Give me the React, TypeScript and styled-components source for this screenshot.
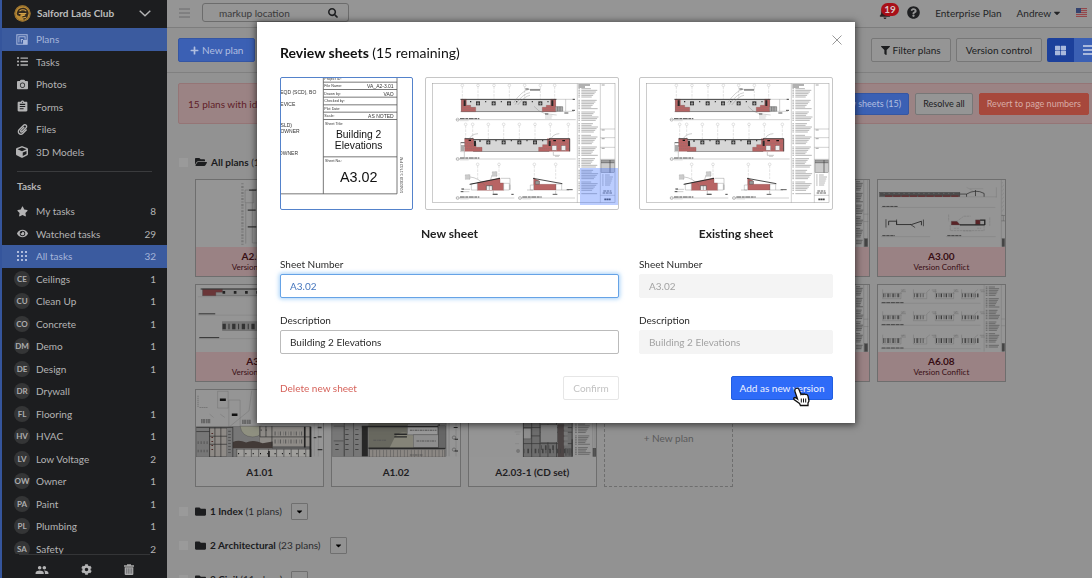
import React from "react";
import styled, { createGlobalStyle, css } from "styled-components";
import {
  FaBell, FaCamera, FaCaretDown, FaCog, FaCube, FaEye, FaFilter, FaFolder, FaFolderOpen,
  FaListUl, FaPaperclip, FaPlus, FaQuestionCircle, FaSearch, FaStar, FaThLarge,
} from "react-icons/fa";
import { MdAssignment, MdPeople } from "react-icons/md";

const Global = createGlobalStyle`
  * { box-sizing: border-box; }
  html, body { margin: 0; height: 100%; overflow: hidden; }
  #root { height: 100%; }
  body, button, input { font-family: Lato, "Liberation Sans", sans-serif; font-size: 10px; line-height: 14px; }
  body { background: #929292; color: #1f2022; }
  button { cursor: pointer; }
  svg { display: block; flex: none; }
  ul { list-style: none; margin: 0; padding: 0; }
`;

const GUTTER = "20px";

const Shell = styled.div`display: flex; height: 100vh; overflow: hidden;`;

/* ---------- sidebar ---------- */
const Sidebar = styled.aside`
  width: 167px; flex: none; display: flex; flex-direction: column;
  background: #1c1d1f; color: #b4b4b5; border-left: 2px solid #35559c;
`;
const Club = styled.button`
  display: flex; align-items: center; gap: 6px; height: 28px; padding: 0 16px 2px 12px; flex: none;
  border: 0; background: none; color: #bdbdbe; font-weight: 700; text-align: left;
  span { flex: 1; white-space: nowrap; }
`;
const Rows = styled.ul<{ $height: number }>`
  display: grid; grid-auto-rows: 1fr; height: ${p => p.$height}px; flex: none;
`;
const Row = styled.a<{ $active?: boolean }>`
  display: flex; align-items: center; gap: 6px; height: 100%; padding: 0 11px 0 12px;
  color: ${p => (p.$active ? "#a6b6da" : "#b4b4b5")}; text-decoration: none;
  background: ${p => (p.$active ? "#3b5b9f" : "transparent")};
`;
const RowIcon = styled.span`width: 16px; display: flex; justify-content: center; color: #b3b3b4;`;
const RowLabel = styled.span`flex: 1;`;
const Avatar = styled.span`
  width: 16px; height: 16px; border-radius: 50%; background: #343536; color: #adadae;
  display: flex; align-items: center; justify-content: center; font-size: 8px; line-height: 8px; font-weight: 700;
`;
const SideRule = styled.hr`
  width: auto; margin: 8px 15px 0; border: 0; border-top: 1px solid #3a3b3d; flex: none;
`;
const SideHeading = styled.h2`margin: 0; padding: 7px 15px; height: 28px; font-size: 10px; font-weight: 700; flex: none;`;
const TaskScroll = styled.div`flex: 1; min-height: 0; overflow: hidden;`;
const SideFoot = styled.div`
  display: flex; justify-content: space-around; align-items: center; flex: none;
  height: 24px; margin: 0 17px; padding-top: 6px; border-top: 1px solid #343537;
`;
const IconButton = styled.button`
  border: 0; padding: 0; background: none; color: inherit; display: flex; align-items: center;
`;

/* ---------- workspace ---------- */
const Main = styled.main`flex: 1; min-width: 0; margin-right: -${GUTTER}; overflow: hidden;`;
const Bar = styled.header`
  display: flex; align-items: center; height: 28px; padding: 0 25px 2px 12px;
  border-bottom: 1px solid #7d7d7d; background: #959595;
`;
const SearchBox = styled.label`
  display: flex; align-items: center; width: 147px; height: 19px; margin-left: 12px; padding: 0 10px 0 16px;
  border: 1px solid #6c6c6c; border-radius: 3px;
  input { flex: 1; min-width: 0; padding: 0; border: 0; outline: 0; background: none; color: #3a3a3b; }
`;
const BarRight = styled.div`display: flex; align-items: center; margin-left: auto;`;
const Bell = styled(IconButton)`position: relative; margin-right: 16px; color: #2b2020;`;
const Badge = styled.span`
  position: absolute; left: 2px; top: -4px; height: 13px; padding: 0 3px; border-radius: 7px;
  background: #a80f18; color: #d6c4c5; font-size: 10px; line-height: 13px; font-weight: 700;
`;
const BarText = styled.span`margin-left: 15px; color: #242527;`;
const UserMenu = styled(IconButton)`gap: 1px; margin: 0 14px 0 15px; color: #242527;`;

const Toolbar = styled.div`
  display: flex; align-items: center; gap: 5px; height: 45px; padding: 0 11px; border-bottom: 1px solid #808080;
`;
type Tone = "blue" | "plain" | "red";
const tones = {
  blue: css`background: #3b60b4; border-color: #3556a3; color: #b0bee0;`,
  plain: css`background: #959595; border-color: #777; color: #1c1d1f;`,
  red: css`background: #a7483c; border-color: #a7483c; color: #d8aca6;`,
};
const Button = styled.button<{ $tone: Tone; $short?: boolean }>`
  display: flex; align-items: center; gap: 3px; white-space: nowrap;
  height: ${p => (p.$short ? 22 : 24)}px; padding: 0 ${p => (p.$short ? 7 : 9)}px;
  font-size: ${p => (p.$short ? 9 : 10)}px; border: 1px solid; border-radius: 2px;
  ${p => tones[p.$tone]}
`;
const NewPlan = styled(Button)`margin-right: auto; padding: 0 11px;`;
const Toggle = styled.div`display: flex; border-radius: 2px; overflow: hidden;`;
const ToggleButton = styled.button<{ $on?: boolean }>`
  width: 27px; height: 24px; padding: 0; border: 0; color: #a9b8dc;
  display: flex; align-items: center; justify-content: center;
  background: ${p => (p.$on ? "#1c409b" : "#3b60b4")};
`;
const Alert = styled.section`
  display: flex; align-items: center; gap: 6px; height: 41px; margin: 10px 13px 0 11px; padding: 0 9px;
  border: 1px solid #957576; border-radius: 2px; background: #9b8384; color: #602028;
  p { margin: 0 auto 0 0; }
`;
const Folder = styled.div`
  display: flex; align-items: center; gap: 4px; height: 34px; padding-left: 12px; color: #1c1d1f;
  > svg { margin-left: 3px; }
`;
const AllPlans = styled(Folder)`margin-top: 21px;`;
const Tick = styled.input`appearance: none; width: 9px; height: 9px; margin: 0; background: #9a9a9a;`;
const FolderName = styled.span`color: #2a2b2d; b { color: #1a1b1d; }`;
const Drop = styled.button`
  width: 17px; height: 17px; margin-left: 5px; padding: 0; border: 1px solid #6f6f6f; border-radius: 1px;
  background: none; display: flex; align-items: center; justify-content: center;
`;
const Cards = styled.div`
  display: grid; grid-template-columns: repeat(auto-fill, minmax(129px, 1fr)); gap: 7px;
  padding: 0 106px 7px 28px;
`;
const Card = styled.article`
  height: 98px; border: 1px solid #6e6e6e; background: #959595; display: flex; flex-direction: column;
  > svg { width: 100%; height: 67px; }
`;
const Caption = styled.div<{ $conflict?: boolean }>`
  flex: 1; display: flex; flex-direction: column; align-items: center; justify-content: center;
  font-size: 10px; line-height: 12px; font-weight: 700;
  ${p => p.$conflict ? css`background: #9a8284; color: #380e14;` : css`background: #969696;`}
  small { font-size: 8px; line-height: 11px; font-weight: 400; }
`;
const NewCard = styled.button`
  height: 98px; border: 1px dashed #6e6e6e; background: none; color: #5a5a5b; padding: 0;
`;

/* ---------- dialog ---------- */
const Backdrop = styled.div`
  position: fixed; inset: 0 -${GUTTER} 0 0; display: flex; justify-content: center; align-items: flex-start;
  padding-top: 22px;
`;
const Dialog = styled.section`
  position: relative; width: 598px; padding: 22px 22px 23px 23px; background: #fff;
  box-shadow: 0 1px 7px 1px rgba(0, 0, 0, .6);
`;
const Title = styled.h1`margin: 0 0 15px; font-size: 14px; line-height: 18px; color: #111; span { font-weight: 400; }`;
const Close = styled(IconButton)`position: absolute; right: 13px; top: 13px; color: #999;`;
const Columns = styled.div`display: grid; grid-template-columns: minmax(0, 339fr) minmax(0, 194fr); column-gap: 20px;`;
const Column = styled.div`display: flex; flex-direction: column;`;
const Previews = styled.div`display: flex; gap: 12px; height: 133px;`;
const Preview = styled.figure<{ $focus?: boolean }>`
  margin: 0; flex: ${p => (p.$focus ? "0 0 133px" : "1")}; min-width: 0; overflow: hidden;
  border: 1px solid ${p => (p.$focus ? "#5482cb" : "#c6c6c6")}; border-radius: 2px;
  svg { width: 100%; height: 100%; }
`;
const ColumnTitle = styled.h2`margin: 16px 0 15px; font-size: 12px; line-height: 16px; text-align: center; color: #222;`;
const Field = styled.label`display: flex; flex-direction: column; gap: 3px; margin-bottom: 15px; color: #2b2b2b;`;
const TextInput = styled.input<{ $lit?: boolean }>`
  width: 100%; height: 24px; padding: 0 9px; border: 1px solid #bbb; border-radius: 2px; outline: 0;
  background: #fff; color: #2b2b2b;
  &:disabled { background: #f4f4f4; border-color: #f4f4f4; color: #a3a3a3; }
  ${p => p.$lit && css`border-color: #66a3e6; color: #4676bd; box-shadow: 0 0 4px 1px rgba(110, 180, 245, .6);`}
`;
const Actions = styled.div`display: flex; align-items: center; margin-top: 7px;`;
const DeleteButton = styled(IconButton)`color: #d6625a;`;
const Confirm = styled.button`
  width: 56px; height: 24px; margin-left: auto; padding: 0; border: 1px solid #e6e6e6; border-radius: 2px;
  background: #fff; color: #c3c3c3;
`;
const AddVersion = styled.button`
  position: relative; width: 102px; height: 24px; margin-left: auto; padding: 0; border: 1px solid #215ee0;
  border-radius: 2px; background: #2e6bf8; color: #eef3ff; white-space: nowrap;
`;
const Pointer = styled.svg`position: absolute; left: 60px; top: 10px;`;

/* ---------- drawings ---------- */
const range = (n: number) => Array.from({ length: n }, (_, i) => i);

/* Short grey strokes that read as a block of fine notes. */
function Notes({ x, y, w, h, step = 5, c = "#777" }: { x: number; y: number; w: number; h: number; step?: number; c?: string }) {
  return (
    <g stroke={c} strokeWidth={2} opacity={0.8}>
      {range(Math.floor(h / step)).filter(i => i % 7 !== 6).map(i => (
        <path key={i} d={`M${x} ${y + i * step}h5m4 0h${(w - 10) * (0.55 + ((i * 37) % 45) / 100)}`} />
      ))}
    </g>
  );
}

const Label = ({ x, y, w }: { x: number; y: number; w: number }) => (
  <g>
    <path d={`M${x} ${y}h${w}`} stroke="#888" strokeWidth="1.2" />
    <circle cx={x + 5} cy={y} r="4.5" fill="none" stroke="#555" />
    <path d={`M${x + 12} ${y - 3}h58`} stroke="#333" strokeWidth="2.6" strokeDasharray="14 2 9 2" />
    <path d={`M${x + 12} ${y + 3}h26`} stroke="#aaa" />
  </g>
);

function GridMarks({ xs, y, h }: { xs: number[]; y: number; h: number }) {
  return (
    <g fill="none" stroke="#aaa">
      {xs.map(x => <g key={x}><circle cx={x} cy={y} r="4" /><path d={`M${x} ${y + 4}v${h}`} strokeDasharray="8 3" /></g>)}
    </g>
  );
}

function Windows({ xs, y }: { xs: number[]; y: number }) {
  return (
    <g>
      {xs.map(x => (
        <g key={x}>
          <rect x={x - 6} y={y} width="12" height="12" fill="#333" />
          <path d={`M${x} ${y + 2}v10M${x - 4} ${y + 7}h8`} stroke="#ddd" strokeWidth="1.5" />
          <circle cx={x + 23} cy={y + 1} r="2" fill="#222" />
        </g>
      ))}
    </g>
  );
}

function Elevations({ selected }: { selected?: boolean }) {
  return (
    <svg viewBox="18 24 576 393" preserveAspectRatio="none" aria-label="Building 2 elevations">
      <rect x="38" y="41" width="547" height="357" fill="#fff" stroke="#999" strokeWidth="1.5" />
      <path d="M472 41v357M541 41v357M541 177h44M541 203h44M541 232h44M541 376h44M541 268h44" stroke="#777" fill="none" />

      <GridMarks xs={[127, 174, 222, 268, 314, 361, 404]} y={46} h={36} />
      <rect x="124" y="88" width="283" height="37" fill="#d6d6d6" stroke="#555" strokeWidth="1.5" />
      <path d="M124 88h15v18h13v6h15v13h-43zM407 88h-15v18h-13v6h-12v13h40z" fill="#b86464" stroke="#8a4c4c" />
      <path d="M124 107h28M124 113h42M124 119h42M367 119h40M379 112h28" stroke="#777" strokeDasharray="4 2" />
      <path d="M134 91v17M397 91v17" stroke="#292929" strokeWidth="6" />
      <path d="M121 88h289" stroke="#333" strokeWidth="2.4" />
      <Windows xs={[174, 221, 267, 314, 361]} y={94} />
      <circle cx="152" cy="95" r="2" />
      <path d="M407 110h21v14h-21M413 110v14M420 110v14" fill="#aaa" stroke="#555" strokeWidth="1.5" />
      <path d="M410 88h52M428 124h34M437 88v36M281 98Q306 62 327 58h35M285 104Q310 70 330 68M293 105Q314 78 330 76M342 109q13 16 33 22l35 4M375 138h22M375 144h20" fill="none" stroke="#777" />
      <path d="M330 60h30M316 57h10M375 132h10M458 88h7M456 121h9M433 129h12" stroke="#222" strokeWidth="2.4" />
      <path d="M121 125h289" stroke="#666" />
      <Label x={108} y={149} w={359} />

      <GridMarks xs={[137, 158, 205, 251, 298, 345, 391, 445]} y={163} h={42} />
      <rect x="161" y="209" width="226" height="36" fill="#d6d6d6" stroke="#555" strokeWidth="1.5" />
      <path d="M134 206h27v14h7v12h18v12h-52zM387 206h62v38h-93v-12h12v-8h14v-18z" fill="#b86464" stroke="#8a4c4c" />
      <path d="M134 220h28M134 228h32M134 236h48M360 236h88M382 220h66" stroke="#777" strokeDasharray="4 2" />
      <path d="M134 206h26M160 209h230M387 206h62M449 206v38M122 218h12M123 228h11" stroke="#333" strokeWidth="2.4" />
      <path d="M122 218v27h12" fill="none" stroke="#777" /><rect x="123" y="228" width="10" height="15" fill="#aaa" />
      <path d="M165 212v16M389 212v16" stroke="#292929" strokeWidth="6" />
      <Windows xs={[205, 251, 298, 345]} y={211} />
      <path d="M146 211h7M178 213h4M400 212h8M427 212h8" stroke="#111" strokeWidth="4" />
      <rect x="396" y="227" width="14" height="14" fill="#eee" stroke="#666" /><rect x="424" y="227" width="13" height="14" fill="#eee" stroke="#666" />
      <path d="M146 209q8-17 28-18M392 209q6-17 26-18M400 246v10h20M133 245v18M405 259h12" fill="none" stroke="#666" />
      <Label x={108} y={267} w={359} />

      <GridMarks xs={[173, 237]} y={283} h={40} />
      <path d="M172 338l68-14v15h11v22h-79z" fill="#b86464" stroke="#8a4c4c" />
      <path d="M154 342v18h18v-20zM251 340h17v20h-17z" fill="#fff" stroke="#777" />
      <path d="M149 343l91-18" stroke="#292929" strokeWidth="3" />
      <path d="M199 360v-13h18v13" fill="#eee" stroke="#555" strokeWidth="2" /><path d="M208 347v13" stroke="#333" />
      <path d="M126 358h24M128 365h20M270 344v15M243 325h27v35M150 321q25 2 45 25M216 315l-5 17M220 362v10h12" fill="none" stroke="#666" />
      <path d="M136 314h14v14h-14zM217 305h14v14h-14z" fill="#ccc" stroke="#888" strokeDasharray="3 1" />
      <path d="M124 357h8M122 365h8M218 373h15M274 373h7" stroke="#222" strokeWidth="2.5" />
      <Label x={108} y={384} w={175} />

      <GridMarks xs={[343, 407]} y={283} h={40} />
      <path d="M341 325l17 8v10h50v17h-67z" fill="#b86464" stroke="#8a4c4c" />
      <path d="M408 342h17v18h-17zM331 345h10v15h-10z" fill="#fff" stroke="#777" />
      <path d="M339 325l88 16" stroke="#292929" strokeWidth="2.5" />
      <path d="M346 333h12v10h-12z" fill="#999" stroke="#444" /><path d="M321 360h18M425 360h22M407 362v10" stroke="#666" />
      <path d="M440 359h18M398 373h14" stroke="#222" strokeWidth="2.2" />
      <Label x={295} y={384} w={170} />

      <path d="M475 45h35M475 51h20" stroke="#444" strokeWidth="2.5" />
      <Notes x={475} y={56} w={62} h={320} />
      <path d="M545 45h9M545 180h9M545 206h9M545 235h9" stroke="#777" strokeWidth="2" />
      <rect x="543" y="270" width="40" height="38" fill="#ccc" stroke="#555" />
      <path d="M543 273h40M543 278h40M570 270v38" stroke="#444" strokeWidth="2" />
      <Notes x={546} y={315} w={36} h={45} step={6} />
      <path d="M550 363h24M548 369h28" stroke="#444" strokeWidth="2.6" strokeDasharray="8 2" />
      <path d="M553 388h20" stroke="#444" strokeWidth="5" strokeDasharray="5 1" />
      {selected && <rect x="480" y="294" width="114" height="111" fill="#4b7bff" opacity="0.38" />}
    </svg>
  );
}

function TitleBlock() {
  const small = { fontSize: 11, fill: "#333" };
  const mid = { fontSize: 15, fill: "#333" };
  return (
    <svg viewBox="33 145 393 392" fontFamily='"Liberation Sans", Arial, sans-serif'>
      <path d="M160 140v352M381 140v352M33 492h348M160 157h221M160 179h221M160 202h221M160 225h221M160 247h221M160 269h221M160 381h221" stroke="#555" strokeWidth="2.4" fill="none" />
      <g {...small}>
        <text x="163" y="151">Project ID:</text><text x="163" y="173">File Name:</text>
        <text x="163" y="196">Drawn by:</text><text x="163" y="217">Checked by:</text>
        <text x="163" y="240">Plot Date:</text><text x="163" y="262">Scale:</text>
        <text x="165" y="287">Sheet Title:</text><text x="165" y="398">Sheet No.:</text>
      </g>
      <g {...mid} textAnchor="end">
        <text x="371" y="175">VA_A2-3.01</text><text x="371" y="198">VAO</text><text x="371" y="264">AS NOTED</text>
        <text x="139" y="194">EQD (SCD), BO</text><text x="76" y="228">EVICE</text>
        <text x="66" y="293">(SLD)</text><text x="89" y="309">OWNER</text><text x="84" y="375">OWNER</text>
      </g>
      <g textAnchor="middle" fill="#111">
        <text x="266" y="325" fontSize="31">Building 2</text><text x="266" y="358" fontSize="31">Elevations</text>
        <text x="266" y="457" fontSize="43">A3.02</text>
      </g>
      <text transform="translate(399 490) rotate(-90)" fontSize="11" fill="#333">5/24/2010 1:17:52 PM</text>
    </svg>
  );
}

function SectionThumb() {
  return (
    <svg viewBox="83 28 384 200" preserveAspectRatio="none" fill="none" stroke="#555">
      <path d="M455 28v200M440 50v30" stroke="#6e6e6e" />
      <path d="M86 78h354" stroke="#777" />
      <rect x="88" y="65" width="242" height="12" fill="#4b4b4b" stroke="#333" />
      <path d="M104 76h226" stroke="#672a2c" strokeWidth="4" strokeDasharray="22 3" />
      <path d="M100 68h225" stroke="#949494" strokeWidth="1.5" strokeDasharray="3 12" />
      <path d="M330 70h20v8M350 70q27-16 53-2v10M377 58v18" stroke="#222" strokeWidth="2" />
      <path d="M350 50l20 10M360 54h40" stroke="#777" />
      <path d="M92 110h345M92 197h148M288 197h150" stroke="#777" />
      <path d="M96 107h48M96 194h38M292 194h42" stroke="#333" strokeWidth="2.5" strokeDasharray="10 2" />
      <path d="M115 163v-12h24v10h45l30-10v12" stroke="#222" strokeWidth="2.5" />
      <path d="M139 146v16M107 145v25M220 146v20M180 160l15 10" stroke="#222" strokeWidth="2" />
      <path d="M304 151h17l10 11h-27z" fill="#592326" /><path d="M377 147h14v14h-14z" fill="#592326" />
      <path d="M330 162h75M391 148h14v14" stroke="#222" strokeWidth="4" />
      <path d="M296 131v20M320 152l22-16h20M301 163v16h102v-16M420 140v25M312 172h15M382 172h12M340 180h25" stroke="#666" strokeDasharray="7 2" />
      <path d="M458 34v100M461 42v80" stroke="#777" strokeDasharray="4 8" />
      <path d="M455 134h12M455 150h12M461 134v16" stroke="#444" /><rect x="457" y="203" width="8" height="24" fill="#444" />
    </svg>
  );
}

function DetailThumb() {
  return (
    <svg viewBox="83 343 384 201" preserveAspectRatio="none" fill="none" stroke="#555">
      {[370, 436, 506].map((y, r) => (
        <g key={y}>
          {[97, 190, 256, 335].map((x, c) => (
            <g key={x}>
              <path d={`M${x} ${y - 14}v28h${c % 2 ? 40 : 55}v-20l10-8M${x} ${y - 2}h${c % 2 ? 36 : 58}`} stroke="#666" />
              <path d={`M${x + 2} ${y + 4}h${c === 1 ? 28 : 50}`} stroke="#3c3c3c" strokeWidth={r === 2 ? 14 : 11} strokeDasharray={c % 2 ? "2 5 4 3 1 4" : "3 3 1 4 2 2"} />
              <path d={`M${x + 55} ${y - 12}h14M${x + 58} ${y - 7}h12`} stroke="#555" />
            </g>
          ))}
          <path d={`M92 ${y + 28}h300`} stroke="#777" />
          <path d={`M94 ${y + 26}h66`} stroke="#333" strokeWidth="2.5" strokeDasharray="12 2" />
        </g>
      ))}
      <path d="M403 343v200M455 343v200M455 465h12M455 445h12" stroke="#6e6e6e" />
      <Notes x={408} y={349} w={44} h={185} c="#444" />
      <rect x="457" y="518" width="8" height="24" fill="#444" />
    </svg>
  );
}

/* Elevations sheet as it shows in the plan list, next to its notes column. */
function SheetThumb({ brick }: { brick?: boolean }) {
  return (
    <svg viewBox="0 0 384 200" preserveAspectRatio="none" fill="none" stroke="#555">
      {brick ? (
        <g>
          <path d="M6 35h300M6 90h300" stroke="#777" />
          <rect x="20" y="12" width="290" height="20" fill="#868686" />
          <path d="M20 12h60v10h-20v10H20z" fill="#6a3638" />
          <path d="M14 12h300" stroke="#333" strokeWidth="3" />
          <path d="M80 22h220" stroke="#222" strokeWidth="8" strokeDasharray="8 26" />
          <path d="M8 86h50" stroke="#333" strokeWidth="3" />
          <rect x="80" y="110" width="230" height="26" fill="#777" />
          <path d="M80 124h226" stroke="#333" strokeWidth="16" strokeDasharray="10 8 3 8" />
          <path d="M8 160h300" stroke="#777" /><path d="M10 157h60" stroke="#333" strokeWidth="3" />
        </g>
      ) : (
        <g>
          <path d="M148 30h26v38h-26zM150 70v120M170 28h150v160H170z" stroke="#555" />
          <path d="M140 10v184" stroke="#777" strokeWidth="7" strokeDasharray="3 5 6 4" />
          <path d="M160 30h22M156 90h24M156 140h26" stroke="#333" strokeWidth="4" />
        </g>
      )}
      <path d="M334 0v200M370 0v200M370 102h14M370 124h14M382 0v200" stroke="#666" />
      <Notes x={338} y={5} w={32} h={190} c="#333" />
      <rect x="372" y="175" width="10" height="24" fill="#444" />
    </svg>
  );
}

function FloorThumb({ variant }: { variant: 1 | 2 | 3 }) {
  if (variant === 3) {
    return (
      <svg viewBox="26 58 384 200" preserveAspectRatio="none" fill="none" stroke="#333">
        <rect x="190" y="70" width="147" height="188" fill="#6d6d6d" />
        <path d="M190 110v148M215 90v168M240 90v168M264 160v98M290 90v168M337 70v188M190 170h147M190 218h147M190 195h50M240 184h97" strokeWidth="2" />
        <rect x="191" y="172" width="22" height="32" fill="#8e8e8e" /><rect x="242" y="162" width="50" height="52" fill="#858585" />
        <rect x="294" y="160" width="19" height="98" fill="#4c4545" stroke="none" />
        <path d="M191 240h145M244 230h48" strokeWidth="14" strokeDasharray="2 9 5 6" stroke="#404040" />
        <path d="M318 150v75" stroke="#777" strokeWidth="12" strokeDasharray="10 6" />
        <path d="M337 205v50" strokeWidth="3" /><path d="M316 243h22" strokeWidth="22" strokeDasharray="2 2" stroke="#444" />
        <Notes x={346} y={160} w={48} h={96} c="#444" />
        <path d="M399 58v200M406 58v200" stroke="#666" /><rect x="400" y="232" width="9" height="24" fill="#555" />
        <circle cx="174" cy="240" r="5" stroke="#666" fill="#777" /><path d="M164 183h18M168 190h10M165 218h12" stroke="#777" />
      </svg>
    );
  }
  if (variant === 2) {
    return (
      <svg viewBox="455 58 384 200" preserveAspectRatio="none" fill="none" stroke="#444">
        <rect x="457" y="60" width="342" height="196" fill="#777" />
        <path d="M565 68h125v164H565z" fill="#68685f" stroke="none" />
        <path d="M643 202q18-28 55-10l20 40h-90z" fill="#858478" stroke="none" />
        <rect x="682" y="160" width="92" height="32" fill="#999" /><rect x="700" y="192" width="78" height="38" fill="#8e8e8e" />
        <rect x="567" y="236" width="228" height="22" fill="#8b8783" />
        <path d="M567 247h228" stroke="#555" strokeWidth="22" strokeDasharray="1.5 9" />
        <path d="M460 166h32v90M520 60v196M492 60v196M460 210h30" strokeWidth="2" />
        <path d="M554 166v90" strokeWidth="18" stroke="#272727" />
        <path d="M545 167h230M565 232h232M643 190h38M643 198h38M778 160v72" strokeWidth="4" stroke="#292929" />
        <path d="M500 175v70M530 175v70M470 220v30" strokeWidth="10" strokeDasharray="2 13" stroke="#333" />
        <path d="M690 178h80M710 210h60M690 252h40M580 208h40" strokeWidth="3" stroke="#555" strokeDasharray="8 2 3 2" />
        <rect x="776" y="165" width="22" height="66" fill="#666" />
        <path d="M808 60v196M829 60v196" stroke="#666" /><circle cx="823" cy="200" r="5" stroke="#222" /><circle cx="823" cy="236" r="5" stroke="#222" />
        <path d="M825 205h10M825 240h10M822 170h12" stroke="#222" strokeWidth="3" />
      </svg>
    );
  }
  return (
    <svg viewBox="47 58 384 200" preserveAspectRatio="none" fill="none" stroke="#444">
      <path d="M112 62h32v50h-32zM146 88h34v80h-34zM88 130l12 10M120 130l14 10M215 60l-8 60-57 46" stroke="#666" />
      <path d="M53 75v34M58 110h25" stroke="#666" strokeWidth="3" strokeDasharray="3 3" />
      <path d="M119 87h18M155 132h17" stroke="#111" strokeWidth="7" />
      <path d="M62 151h30M186 153h26" stroke="#666" strokeWidth="13" strokeDasharray="5 1 7 2" />
      <rect x="48" y="168" width="346" height="90" fill="#777" />
      <path d="M180 166q5 32 38 32t28-32z" fill="#8f9080" />
      <rect x="88" y="172" width="52" height="84" fill="#8e8a86" /><rect x="238" y="168" width="154" height="58" fill="#8e8b87" />
      <path d="M158 213q20-8 40 2 20-10 50 2l30-5v20H158z" fill="#423a37" stroke="none" />
      <rect x="168" y="235" width="226" height="23" fill="#a09f9c" />
      <path d="M170 234v24M192 234v24M214 234v24M236 234v24M266 234v24M290 234v24M312 234v24M334 234v24M356 234v24M378 234v24" strokeWidth="2" />
      <path d="M174 248h214" strokeWidth="4" strokeDasharray="3 19" stroke="#111" />
      <path d="M48 170h110M48 182h40M158 168v90M88 170v88M104 170v88M122 170v88M88 196h52M88 220h52M240 166v32h152M258 166v32M276 166v60M276 231h118" strokeWidth="2" stroke="#2b2b2b" />
      <path d="M52 215h32M52 240h32M148 180v70" strokeWidth="8" stroke="#555" strokeDasharray="3 6" />
      <path d="M284 188h90M284 212h90" strokeWidth="12" stroke="#555" strokeDasharray="3 7 1 5" />
      <path d="M242 178h30" strokeWidth="4" stroke="#333" strokeDasharray="3 12" /><path d="M96 186v60" strokeWidth="5" stroke="#4e2c28" strokeDasharray="3 9" />
      <path d="M375 168v62M392 168v90M267 240v18" stroke="#222" strokeWidth="5" />
      <path d="M404 60v196M416 60v196" stroke="#777" /><path d="M414 170h12M414 198h12M414 236h14M402 200h8" stroke="#333" strokeWidth="4" />
    </svg>
  );
}

/* ---------- small icons ---------- */
const ClubLogo = () => (
  <svg width="17" height="17" viewBox="0 0 50 50">
    <circle cx="25" cy="25" r="24" fill="#b98a35" />
    <path d="M8 25Q10 9 27 8q14 2 16 16l-4 13-10 7-5-10 10-4-2-6H20l-2 9-8-3z" fill="#33291d" />
    <path d="M16 18q10-8 20 0M14 25h22M22 31h9M26 38l10-2" stroke="#d3a34b" strokeWidth="3" fill="none" />
    <circle cx="25" cy="25" r="22" fill="none" stroke="#81602a" strokeWidth="2" />
  </svg>
);
const Chevron = () => (
  <svg width="12" height="7" viewBox="0 0 12 7" fill="none" stroke="#b5b5b6" strokeWidth="1.4"><path d="M.7.7 6 5.8 11.3.7" /></svg>
);
const PlansIcon = () => (
  <svg width="12" height="11" viewBox="0 0 34 32" fill="none" stroke="#a9b8dc" strokeWidth="3">
    <path d="M2 2h30v28H2z" /><path d="M8 25V8h18v8M15 25v-9h5" /><path d="M20 17h12v13H20z" fill="#a9b8dc" stroke="none" />
  </svg>
);
const DotGrid = () => (
  <svg width="10" height="10" viewBox="0 0 10 10" fill="#aebbdc">
    {range(9).map(i => <rect key={i} x={(i % 3) * 4} y={Math.floor(i / 3) * 4} width="2" height="2" />)}
  </svg>
);
const Lines = ({ w, c, t }: { w: number; c: string; t: number }) => (
  <svg width={w} height="10" viewBox="0 0 11 10" preserveAspectRatio="none" stroke={c} strokeWidth={t}><path d="M0 1h11M0 5h11M0 9h11" /></svg>
);
const Trash = () => (
  <svg width="10" height="11" viewBox="0 0 30 33" fill="#aaaaab">
    <path d="M0 4h9V1h12v3h9v4H0zM2 10h26v20q0 3-3 3H5q-3 0-3-3z" />
    <path d="M8 13v16M13 13v16M18 13v16M23 13v16" stroke="#56575a" strokeWidth="2" />
  </svg>
);
const Flag = () => (
  <svg width="11" height="9" viewBox="0 0 11 9">
    <rect width="11" height="9" fill="#96898a" />
    <path d="M0 .5h11M0 2.5h11M0 4.5h11M0 6.5h11M0 8.5h11" stroke="#94464a" />
    <rect width="5" height="5" fill="#34436f" />
  </svg>
);
const Cross = () => (
  <svg width="10" height="10" viewBox="0 0 10 10" stroke="currentColor"><path d="M.5.5l9 9M9.5.5l-9 9" /></svg>
);

/* ---------- data ---------- */
const pages = [
  { name: "Plans", icon: <PlansIcon />, active: true },
  { name: "Tasks", icon: <FaListUl size={11} /> },
  { name: "Photos", icon: <FaCamera size={11} /> },
  { name: "Forms", icon: <MdAssignment size={13} /> },
  { name: "Files", icon: <FaPaperclip size={11} /> },
  { name: "3D Models", icon: <FaCube size={12} /> },
];
const tasks: { name: string; count?: number; icon?: React.ReactNode; code?: string; active?: boolean }[] = [
  { name: "My tasks", count: 8, icon: <FaStar size={11} /> },
  { name: "Watched tasks", count: 29, icon: <FaEye size={11} /> },
  { name: "All tasks", count: 32, icon: <DotGrid />, active: true },
  { name: "Ceilings", count: 1, code: "CE" },
  { name: "Clean Up", count: 1, code: "CU" },
  { name: "Concrete", count: 1, code: "CO" },
  { name: "Demo", count: 1, code: "DM" },
  { name: "Design", count: 1, code: "DE" },
  { name: "Drywall", code: "DR" },
  { name: "Flooring", count: 1, code: "FL" },
  { name: "HVAC", count: 1, code: "HV" },
  { name: "Low Voltage", count: 2, code: "LV" },
  { name: "Owner", count: 1, code: "OW" },
  { name: "Paint", count: 1, code: "PA" },
  { name: "Plumbing", count: 1, code: "PL" },
  { name: "Safety", count: 2, code: "SA" },
];
const plans: { name: string; art: React.ReactNode; conflict?: boolean }[] = [
  { name: "A2.01-1", art: <SheetThumb />, conflict: true },
  { name: "A2.02", art: <SheetThumb />, conflict: true },
  { name: "A2.03", art: <SheetThumb />, conflict: true },
  { name: "A2.04", art: <SheetThumb />, conflict: true },
  { name: "A2.05", art: <SheetThumb />, conflict: true },
  { name: "A3.00", art: <SectionThumb />, conflict: true },
  { name: "A3.01", art: <SheetThumb brick />, conflict: true },
  { name: "A3.02", art: <SheetThumb brick />, conflict: true },
  { name: "A6.05", art: <SheetThumb brick />, conflict: true },
  { name: "A6.06", art: <SheetThumb brick />, conflict: true },
  { name: "A6.07", art: <SheetThumb brick />, conflict: true },
  { name: "A6.08", art: <DetailThumb />, conflict: true },
  { name: "A1.01", art: <FloorThumb variant={1} /> },
  { name: "A1.02", art: <FloorThumb variant={2} /> },
  { name: "A2.03-1 (CD set)", art: <FloorThumb variant={3} /> },
];
const folders = [
  { name: "1 Index", count: 1 },
  { name: "2 Architectural", count: 23 },
  { name: "3 Civil", count: 11 },
];

function SideNav() {
  return (
    <Sidebar>
      <Club><ClubLogo /><span>Salford Lads Club</span><Chevron /></Club>
      <Rows $height={135}>
        {pages.map(p => (
          <li key={p.name}><Row href="#" $active={p.active}><RowIcon>{p.icon}</RowIcon><RowLabel>{p.name}</RowLabel></Row></li>
        ))}
      </Rows>
      <SideRule />
      <SideHeading>Tasks</SideHeading>
      <TaskScroll>
        <Rows $height={360}>
          {tasks.map(t => (
            <li key={t.name}>
              <Row href="#" $active={t.active}>
                {t.code ? <Avatar>{t.code}</Avatar> : <RowIcon>{t.icon}</RowIcon>}
                <RowLabel>{t.name}</RowLabel>
                {t.count && <span>{t.count}</span>}
              </Row>
            </li>
          ))}
        </Rows>
      </TaskScroll>
      <SideFoot>
        <IconButton aria-label="People"><MdPeople size={14} /></IconButton>
        <IconButton aria-label="Settings"><FaCog size={11} /></IconButton>
        <IconButton aria-label="Trash"><Trash /></IconButton>
      </SideFoot>
    </Sidebar>
  );
}

function Workspace() {
  return (
    <Main>
      <Bar>
        <IconButton aria-label="Menu"><Lines w={11} c="#6b6b6c" t={1} /></IconButton>
        <SearchBox><input aria-label="Search" defaultValue="markup location" /><FaSearch size={10} /></SearchBox>
        <BarRight>
          <Bell aria-label="Notifications"><FaBell size={12} /><Badge>19</Badge></Bell>
          <FaQuestionCircle size={13} />
          <BarText>Enterprise Plan</BarText>
          <UserMenu>Andrew <FaCaretDown size={10} /></UserMenu>
          <Flag />
        </BarRight>
      </Bar>
      <Toolbar>
        <NewPlan $tone="blue"><FaPlus size={9} />New plan</NewPlan>
        <Button $tone="plain"><FaFilter size={9} />Filter plans</Button>
        <Button $tone="plain">Version control</Button>
        <Toggle>
          <ToggleButton $on aria-label="Grid view"><FaThLarge size={11} /></ToggleButton>
          <ToggleButton aria-label="List view"><Lines w={10} c="#a9b8dc" t={2} /></ToggleButton>
        </Toggle>
      </Toolbar>
      <Alert>
        <p>15 plans with identical sheet numbers</p>
        <Button $tone="blue" $short>Review sheets (15)</Button>
        <Button $tone="plain" $short>Resolve all</Button>
        <Button $tone="red" $short>Revert to page numbers</Button>
      </Alert>
      <AllPlans>
        <Tick type="checkbox" aria-label="Select all plans" />
        <FaFolderOpen size={12} />
        <FolderName><b>All plans</b> (15 plans)</FolderName>
      </AllPlans>
      <Cards>
        {plans.map(p => (
          <Card key={p.name}>
            {p.art}
            <Caption $conflict={p.conflict}>{p.name}{p.conflict && <small>Version Conflict</small>}</Caption>
          </Card>
        ))}
        <NewCard>+ New plan</NewCard>
      </Cards>
      {folders.map(f => (
        <Folder key={f.name}>
          <Tick type="checkbox" aria-label={`Select ${f.name}`} />
          <FaFolder size={11} />
          <FolderName><b>{f.name}</b> ({f.count} plans)</FolderName>
          <Drop aria-label={`${f.name} options`}><FaCaretDown size={9} /></Drop>
        </Folder>
      ))}
    </Main>
  );
}

function ReviewDialog() {
  return (
    <Backdrop>
      <Dialog role="dialog" aria-labelledby="review-title">
        <Title id="review-title">Review sheets <span>(15 remaining)</span></Title>
        <Close aria-label="Close"><Cross /></Close>
        <Columns>
          <Column>
            <Previews>
              <Preview $focus><TitleBlock /></Preview>
              <Preview><Elevations selected /></Preview>
            </Previews>
            <ColumnTitle>New sheet</ColumnTitle>
            <Field>Sheet Number<TextInput $lit defaultValue="A3.02" /></Field>
            <Field>Description<TextInput defaultValue="Building 2 Elevations" /></Field>
            <Actions><DeleteButton>Delete new sheet</DeleteButton><Confirm disabled>Confirm</Confirm></Actions>
          </Column>
          <Column>
            <Previews><Preview><Elevations /></Preview></Previews>
            <ColumnTitle>Existing sheet</ColumnTitle>
            <Field>Sheet Number<TextInput disabled defaultValue="A3.02" /></Field>
            <Field>Description<TextInput disabled defaultValue="Building 2 Elevations" /></Field>
            <Actions>
              <AddVersion>
                Add as new version
                <Pointer width="18" height="20" viewBox="0 0 18 20">
                  <path d="M4 1.5q2-1 3 1l2 5q1-1 2 0 1-1 2.300 0 2-.6 2.700 1.500l1 5-1 2v2.500H8.500l-1-2L2 12.500q-1-2 1.500-2l2 1.500L2.800 4Q2.500 2 4 1.500z" fill="#fff" stroke="#111" strokeWidth="1.3" />
                  <path d="M9.300 11.500v4M11.500 11.500v4M13.700 11.500v4" stroke="#111" />
                </Pointer>
              </AddVersion>
            </Actions>
          </Column>
        </Columns>
      </Dialog>
    </Backdrop>
  );
}

export default function App() {
  return (
    <>
      <Global />
      <Shell><SideNav /><Workspace /></Shell>
      <ReviewDialog />
    </>
  );
}
